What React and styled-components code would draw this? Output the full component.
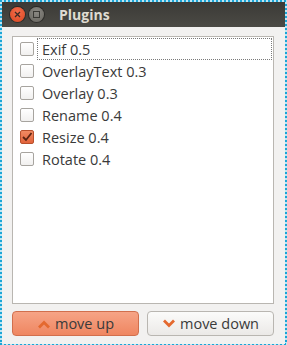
import React from 'react';
import styled, { createGlobalStyle } from 'styled-components';

const Global = createGlobalStyle`
  html, body { margin: 0; padding: 0; }
  body { width: 287px; height: 345px; overflow: hidden; background: #fff; }
`;

const h = 'repeating-linear-gradient(90deg, #1ba5d6 0 2px, #bfe6f3 2px 4px)';
const v = 'repeating-linear-gradient(180deg, #1ba5d6 0 2px, #bfe6f3 2px 4px)';

const Frame = styled.div`
  box-sizing: border-box;
  width: 287px;
  height: 345px;
  padding: 2px;
  background: ${h} top left / 100% 2px no-repeat, ${h} bottom left / 100% 2px no-repeat,
    ${v} top left / 2px 100% no-repeat, ${v} top right / 2px 100% no-repeat;
  display: flex;
  flex-direction: column;
  font-family: "Open Sans", "DejaVu Sans", sans-serif;
`;

const TitleBar = styled.div`
  height: 25px;
  flex: none;
  background: linear-gradient(#3b3a36, #4b4a45);
  display: flex;
  align-items: center;
  padding-left: 8px;
  gap: 4px;
`;

const WinButton = styled.div`
  width: 15px;
  height: 15px;
  border-radius: 50%;
  background: ${(p) => (p.close ? 'radial-gradient(circle at 50% 35%, #f36d4b, #d9451f)' : 'radial-gradient(circle at 50% 35%, #8a8883, #67655f)')};
  box-shadow: 0 0 0 1px rgba(0,0,0,0.35);
  display: flex;
  align-items: center;
  justify-content: center;
`;

const Title = styled.div`
  margin-left: 11px;
  color: #dfdbd2;
  font-weight: bold;
  font-size: 14px;
`;

const Body = styled.div`
  flex: 1;
  background: #f2f1f0;
  padding: 9px 11px 8px 10px;
  display: flex;
  flex-direction: column;
`;

const List = styled.div`
  height: 264px;
  background: #fff;
  border: 1px solid #b9b6b1;
  padding: 1px 1px;
  display: flex;
  flex-direction: column;
`;

const Row = styled.label`
  height: 22px;
  display: flex;
  align-items: center;
  padding-left: 6px;
  font-size: 14.5px;
  color: #3a3a3a;
`;

const Box = styled.span`
  box-sizing: border-box;
  width: 14px;
  height: 14px;
  border-radius: 2px;
  border: 1px solid ${(p) => (p.checked ? '#b8502c' : '#a7a49f')};
  background: ${(p) => (p.checked ? 'linear-gradient(#f08a63, #e2633b)' : 'linear-gradient(#fff, #f1f0ef)')};
  display: flex;
  align-items: center;
  justify-content: center;
  flex: none;
`;

const Label = styled.span`
  margin-left: 4px;
  padding: 0 4px 0 4px;
  height: 20px;
  display: flex;
  align-items: center;
  flex: ${(p) => (p.focused ? 1 : 'none')};
  outline: ${(p) => (p.focused ? '1px dotted #7a7a7a' : 'none')};
  margin-right: ${(p) => (p.focused ? '1px' : '0')};
`;

const Buttons = styled.div`
  display: flex;
  gap: 8px;
  margin-top: 7px;
`;

const Button = styled.div`
  box-sizing: border-box;
  flex: 1;
  height: 25px;
  border-radius: 4px;
  border: 1px solid ${(p) => (p.primary ? '#d16f4d' : '#b9b6b1')};
  background: ${(p) => (p.primary ? 'linear-gradient(#f6a486, #ef8661)' : 'linear-gradient(#fbfbfa, #ebe9e7)')};
  display: flex;
  align-items: center;
  justify-content: center;
  gap: 4px;
  font-size: 14.5px;
  color: #3a3a3a;
`;

const Chevron = ({ up }) => (
  <svg width="14" height="10" viewBox="0 0 14 10">
    <path
      d={up ? 'M2 8.5 L7 3.5 L12 8.5' : 'M2 1.5 L7 6.5 L12 1.5'}
      fill="none"
      stroke="#e4692f"
      strokeWidth="2.8"
    />
  </svg>
);

const plugins = [
  { name: 'Exif 0.5', checked: false },
  { name: 'OverlayText 0.3', checked: false },
  { name: 'Overlay 0.3', checked: false },
  { name: 'Rename 0.4', checked: false },
  { name: 'Resize 0.4', checked: true },
  { name: 'Rotate 0.4', checked: false },
];

export default function App() {
  return (
    <>
      <Global />
      <Frame>
        <TitleBar>
          <WinButton close>
            <svg width="7" height="7" viewBox="0 0 7 7">
              <path d="M1 1 L6 6 M6 1 L1 6" stroke="#3b2a24" strokeWidth="1.3" />
            </svg>
          </WinButton>
          <WinButton>
            <svg width="7" height="7" viewBox="0 0 7 7">
              <rect x="0.5" y="0.5" width="6" height="6" fill="none" stroke="#3a3935" strokeWidth="1" />
            </svg>
          </WinButton>
          <Title>Plugins</Title>
        </TitleBar>
        <Body>
          <List>
            {plugins.map((p, i) => (
              <Row key={p.name}>
                <Box checked={p.checked}>
                  {p.checked && (
                    <svg width="12" height="12" viewBox="0 0 12 12">
                      <path d="M2 6 L5 9 L10.5 2" fill="none" stroke="#5a2412" strokeWidth="1.8" />
                    </svg>
                  )}
                </Box>
                <Label focused={i === 0}>{p.name}</Label>
              </Row>
            ))}
          </List>
          <Buttons>
            <Button primary>
              <Chevron up />
              move up
            </Button>
            <Button>
              <Chevron />
              move down
            </Button>
          </Buttons>
        </Body>
      </Frame>
    </>
  );
}
